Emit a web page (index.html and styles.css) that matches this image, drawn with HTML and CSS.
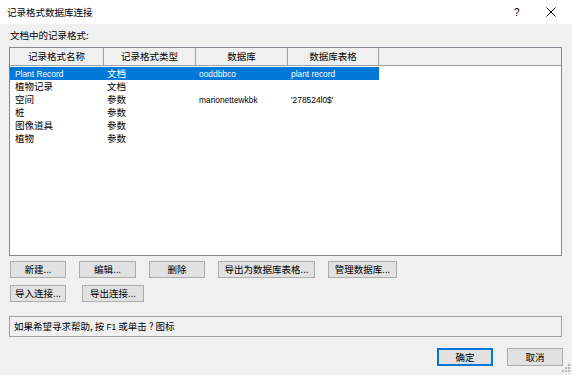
FILE: index.html
```html
<!DOCTYPE html>
<html lang="zh-CN">
<head>
  <meta charset="UTF-8" />
  <title>记录格式数据库连接</title>
  <link rel="stylesheet" href="styles.css">
</head>
<body>
  <div class="dialog">
    <!-- Title bar -->
    <div class="titlebar">
      <span class="title">记录格式数据库连接</span>
      <span class="help">?</span>
      <span class="close">
        <svg width="10" height="10" viewBox="0 0 10 10"><path d="M0.5 0.5 L9.5 9.5 M9.5 0.5 L0.5 9.5" stroke="#000" stroke-width="1" fill="none"/></svg>
      </span>
    </div>

    <div class="content">
      <div class="label">文档中的记录格式:</div>

      <div class="listbox">
        <div class="list-header">
          <div class="hcell c1">记录格式名称</div>
          <div class="hcell c2">记录格式类型</div>
          <div class="hcell c3">数据库</div>
          <div class="hcell c4">数据库表格</div>
        </div>
        <div class="row selected">
          <div class="cell c1"><span class="en">Plant Record</span></div>
          <div class="cell c2">文档</div>
          <div class="cell c3"><span class="en">ooddbbco</span></div>
          <div class="cell c4"><span class="en">plant record</span></div>
        </div>
        <div class="row">
          <div class="cell c1">植物记录</div>
          <div class="cell c2">文档</div>
          <div class="cell c3"></div>
          <div class="cell c4"></div>
        </div>
        <div class="row">
          <div class="cell c1">空间</div>
          <div class="cell c2">参数</div>
          <div class="cell c3"><span class="en">marionettewkbk</span></div>
          <div class="cell c4"><span class="en">'278524l0$'</span></div>
        </div>
        <div class="row">
          <div class="cell c1">桩</div>
          <div class="cell c2">参数</div>
          <div class="cell c3"></div>
          <div class="cell c4"></div>
        </div>
        <div class="row">
          <div class="cell c1">图像道具</div>
          <div class="cell c2">参数</div>
          <div class="cell c3"></div>
          <div class="cell c4"></div>
        </div>
        <div class="row">
          <div class="cell c1">植物</div>
          <div class="cell c2">参数</div>
          <div class="cell c3"></div>
          <div class="cell c4"></div>
        </div>
      </div>

      <div class="btn-row first">
        <button class="btn w56">新建...</button>
        <button class="btn w57">编辑...</button>
        <button class="btn w56">删除</button>
        <button class="btn w97">导出为数据库表格...</button>
        <button class="btn w69">管理数据库...</button>
      </div>
      <div class="btn-row second">
        <button class="btn w56">导入连接...</button>
        <button class="btn w62">导出连接...</button>
      </div>

      <div class="status">如果希望寻求帮助, 按 <span class="en">F1</span> 或单击 ? 图标</div>

      <div class="footer">
        <button class="btn default">确定</button>
        <button class="btn cancel">取消</button>
      </div>
    </div>

    <div class="grip">
      <svg width="8" height="8" viewBox="0 0 8 8">
        <rect x="6" y="0" width="2" height="2" fill="#b8b8b8"/>
        <rect x="3" y="3" width="2" height="2" fill="#b8b8b8"/>
        <rect x="6" y="3" width="2" height="2" fill="#b8b8b8"/>
        <rect x="0" y="6" width="2" height="2" fill="#b8b8b8"/>
        <rect x="3" y="6" width="2" height="2" fill="#b8b8b8"/>
        <rect x="6" y="6" width="2" height="2" fill="#b8b8b8"/>
      </svg>
    </div>
  </div>
</body>
</html>
```

FILE: styles.css
```css
body {
  margin: 0;
  font-family: "Noto Sans CJK SC", "Noto Sans", sans-serif;
  font-size: 9.5px;
  color: #000;
  background: #f0f0f0;
}

.en {
  font-family: "Liberation Sans", Arial, sans-serif;
  font-size: 8.4px;
}

.dialog {
  position: relative;
  width: 572px;
  height: 375px;
  background: #f0f0f0;
  overflow: hidden;
}

.titlebar {
  height: 24px;
  background: #fff;
  display: flex;
  align-items: center;
  padding-left: 7px;
}

.title {
  flex: 1;
  line-height: 24px;
}

.help {
  width: 12px;
  margin-right: 20px;
  font-family: "Liberation Sans", Arial, sans-serif;
  font-size: 10px;
}

.close {
  display: flex;
  margin-right: 16px;
}

.content {
  padding: 0 10px 0 9px;
}

.label {
  height: 23px;
  line-height: 22px;
  padding-left: 1px;
}

.listbox {
  height: 207px;
  background: #fff;
  border: 1px solid #828790;
}

.list-header {
  display: flex;
  height: 17px;
  background: #f0f0f0;
  border-bottom: 1px solid #a0a0a0;
}

.hcell {
  text-align: center;
  line-height: 17px;
  border-right: 1px solid #a0a0a0;
  box-sizing: border-box;
  white-space: nowrap;
}

.c1 { width: 94px; }
.c2 { width: 92px; }
.c3 { width: 92px; }
.c4 { width: 91px; }

.row {
  display: flex;
  width: 369px;
  height: 13px;
  line-height: 13px;
}

.row.selected {
  margin-top: 1px;
  background: #0078d7;
  color: #fff;
}

.cell {
  box-sizing: border-box;
  padding-left: 3px;
  white-space: nowrap;
  overflow: hidden;
}

.cell.c1 {
  padding-left: 5px;
}

.btn-row {
  display: flex;
  gap: 13px;
}

.btn-row.first {
  margin-top: 5px;
}

.btn-row.second {
  margin-top: 7px;
  gap: 16px;
}

.btn {
  height: 17px;
  padding: 0;
  margin: 0;
  font-family: inherit;
  font-size: 9.5px;
  line-height: 15px;
  white-space: nowrap;
  color: #000;
  background: #e1e1e1;
  border: 1px solid #adadad;
  box-sizing: border-box;
}

.btn-row .btn:first-child {
  margin-left: 1px;
}

.w56 { width: 56px; }
.w57 { width: 57px; }
.w62 { width: 62px; }
.w69 { width: 69px; }
.w97 { width: 97px; }

.status {
  margin-top: 14px;
  height: 21px;
  line-height: 19px;
  padding-left: 4px;
  border: 1px solid #a0a0a0;
  box-sizing: border-box;
}

.footer {
  display: flex;
  justify-content: flex-end;
  gap: 14px;
  margin-top: 11px;
}

.footer .btn {
  width: 56px;
  height: 18px;
}

.footer .btn.default {
  border: 2px solid #0078d7;
  line-height: 14px;
}

.footer .btn.cancel {
  margin-right: -1px;
}

.grip {
  position: absolute;
  right: 2px;
  bottom: 3px;
  display: flex;
}
```
